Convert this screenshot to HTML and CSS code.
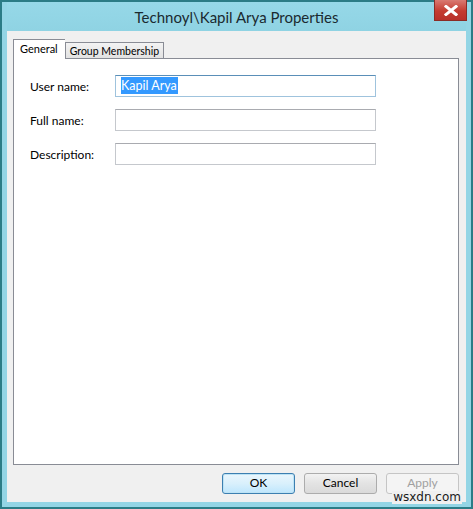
FILE: index.html
```html
<!DOCTYPE html>
<html lang="en">
<head>
    <meta charset="UTF-8">
    <title>Technoyl\Kapil Arya Properties</title>
    <link rel="stylesheet" href="styles.css">
</head>
<body>
    <div class="window">
        <div class="titlebar">
            <div class="title">Technoyl\Kapil Arya Properties</div>
            <div class="close-btn">
                <svg width="14" height="11" viewBox="0 0 14 11">
                    <path d="M2 1.5 L12 9.5 M12 1.5 L2 9.5" stroke="#fff" stroke-width="3" stroke-linecap="square"/>
                </svg>
            </div>
        </div>

        <div class="client">
            <div class="tabs">
                <div class="tab active">General</div>
                <div class="tab">Group Membership</div>
            </div>

            <div class="panel">
                <div class="field">
                    <label>User name:</label>
                    <div class="input focused"><span class="selected">Kapil Arya</span></div>
                </div>
                <div class="field">
                    <label>Full name:</label>
                    <div class="input"></div>
                </div>
                <div class="field">
                    <label>Description:</label>
                    <div class="input"></div>
                </div>
            </div>

            <div class="buttons">
                <div class="btn default">OK</div>
                <div class="btn">Cancel</div>
                <div class="btn disabled">Apply</div>
            </div>
        </div>
        <div class="watermark">wsxdn.com</div>
    </div>
</body>
</html>
```

FILE: styles.css
```css
* {
    margin: 0;
    padding: 0;
    box-sizing: border-box;
}

body {
    width: 473px;
    height: 509px;
    background: #2b7c86;
    font-family: Lato, 'Open Sans', sans-serif;
}

.window {
    position: relative;
    width: 473px;
    height: 509px;
    border: 2px solid #2b7c86;
    background: #93d5e5;
    padding: 0 5px 5px 5px;
    display: flex;
    flex-direction: column;
}

.titlebar {
    height: 29px;
    position: relative;
    display: flex;
    align-items: center;
    justify-content: center;
    background: linear-gradient(#96d8e8, #8fd3e3);
}

.title {
    font-size: 15px;
    color: #1a2a30;
    margin-top: 1px;
}

.close-btn {
    position: absolute;
    top: -2px;
    right: -1px;
    width: 33px;
    height: 21px;
    background: linear-gradient(#d97a72, #c43b30 55%, #b8302a);
    border: 1px solid #8a2c26;
    border-top: none;
    display: flex;
    align-items: center;
    justify-content: center;
}

.client {
    flex: 1;
    background: #f0f0f0;
    padding: 8px 6px 0 6px;
    display: flex;
    flex-direction: column;
    font-size: 12px;
    color: #000;
}

.tabs {
    display: flex;
    align-items: flex-end;
    height: 19px;
    position: relative;
    z-index: 1;
}

.tab {
    height: 16px;
    padding: 0 4px;
    border: 1px solid #898c95;
    border-bottom: none;
    background: linear-gradient(#f3f3f3, #e2e2e2);
    display: flex;
    align-items: center;
    font-size: 10.5px;
}

.tab.active {
    height: 20px;
    margin-bottom: -1px;
    background: #fff;
    padding: 0 7px 2px 6px;
    border-right: none;
    font-size: 11px;
}

.panel {
    height: 407px;
    background: #fff;
    border: 1px solid #898c95;
    margin-right: 1px;
    padding: 16px 0 0 16px;
    display: flex;
    flex-direction: column;
    gap: 12px;
}

.field {
    display: flex;
    align-items: center;
}

.field label {
    width: 85px;
    font-size: 12px;
}

.input {
    width: 261px;
    height: 22px;
    border: 1px solid #c5c8cd;
    border-top-color: #a9abb0;
    background: #fff;
    padding: 2px 0 0 5px;
    font-size: 12.5px;
}

.input.focused {
    border-color: #9fc3dd;
    border-top-color: #5a8fb8;
}

.selected {
    background: #3399ff;
    color: #fff;
    padding: 1px 1px 1px 0;
}

.buttons {
    display: flex;
    justify-content: flex-end;
    gap: 9px;
    margin-top: 8px;
    padding-right: 1px;
}

.btn {
    width: 73px;
    height: 21px;
    border: 1px solid #acacac;
    border-radius: 3px;
    background: linear-gradient(#f2f2f2, #e3e3e3 50%, #dadada);
    display: flex;
    align-items: center;
    justify-content: center;
    font-size: 12px;
    padding-bottom: 2px;
}

.btn.default {
    border-color: #3c7fb1;
    background: linear-gradient(#eaf6fd, #d9f0fc 50%, #bee6fd);
    box-shadow: inset 0 0 0 1px #bde3f5;
}

.btn.disabled {
    border-color: #c5c5c5;
    background: #f4f4f4;
    color: #a0a0a0;
}

.watermark {
    position: absolute;
    right: 9px;
    bottom: 3px;
    font-family: 'DejaVu Sans', sans-serif;
    font-size: 12px;
    color: #1a1a1a;
    background: #f0f0f0;
    line-height: 13px;
    padding: 0 1px;
}
```
